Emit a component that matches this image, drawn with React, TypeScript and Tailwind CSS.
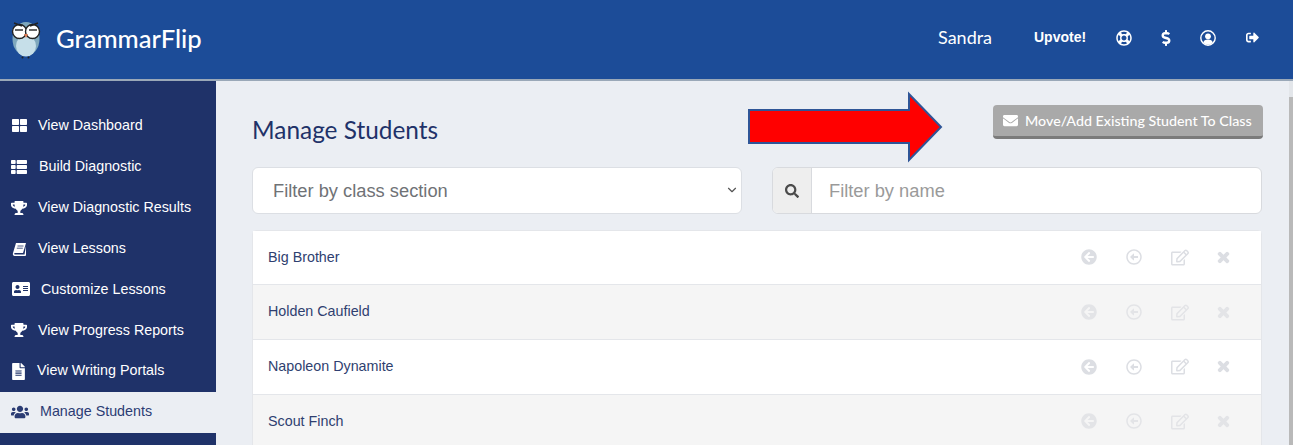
import { ChevronDown } from 'lucide-react';
import { FaAddressCard, FaArrowCircleLeft, FaDollarSign, FaEnvelope, FaFileAlt, FaRegArrowAltCircleLeft, FaRegEdit, FaRegLifeRing, FaSearch, FaSignOutAlt, FaThLarge, FaThList, FaTimes, FaTrophy, FaUsers } from 'react-icons/fa';

const Owl = () => (
  <svg width="32" height="40" viewBox="0 0 32 40" className="shrink-0">
    <ellipse cx="16" cy="20" rx="13.5" ry="17" fill="#7fa8bd" />
    <ellipse cx="16" cy="27" rx="10" ry="10.5" fill="#c6dfe9" />
    <circle cx="9.5" cy="12.5" r="7" fill="#fff" stroke="#222" strokeWidth="1.4" />
    <circle cx="22.5" cy="12.5" r="7" fill="#fff" stroke="#222" strokeWidth="1.4" />
    <path d="M4 4 L12 7 M28 4 L20 7" stroke="#222" strokeWidth="1.4" />
    <path d="M5 11 H13 M19 11 H27" stroke="#333" strokeWidth="1.6" />
    <path d="M14 15 L18 15 L16 19 Z" fill="#d9774f" />
    <circle cx="12.5" cy="38.5" r="1" fill="#222" />
    <circle cx="18.5" cy="38.5" r="1" fill="#222" />
  </svg>
);

const SlantedBook = () => (
  <svg viewBox="0 0 14 14" className="w-[14px] h-[14px] ml-[12px] mr-[12px]">
    <path fill="currentColor" d="M4 1h10l-3 10H3c-1 0-1.2 1.5 0 1.5h9.5L14 4v9l-.5 1H2.5C1 14 .5 12.5 1 11z" />
    <path stroke="#1f3269" strokeWidth="0.8" d="M5.5 4h6M4.8 6.2h6" />
  </svg>
);

const UserRing = () => (
  <svg viewBox="0 0 16 16" className="w-[16px] h-[16px] -ml-[2px]">
    <circle cx="8" cy="8" r="7.2" fill="none" stroke="currentColor" strokeWidth="1.4" />
    <circle cx="8" cy="6.3" r="2.9" fill="currentColor" />
    <path fill="currentColor" d="M3.2 12.6c.6-2 2-3 4.8-3s4.200 1 4.800 3C11.500 14 9.800 14.700 8 14.700S4.500 14 3.200 12.600z" />
  </svg>
);

const navItems = [
  { label: 'View Dashboard', icon: <FaThLarge className="w-[15px] h-[15px] ml-[12px] mr-[11px]" /> },
  { label: 'Build Diagnostic', icon: <FaThList className="w-[16px] h-[16px] ml-[11px] mr-[12px]" /> },
  { label: 'View Diagnostic Results', icon: <FaTrophy className="w-[16px] h-[16px] ml-[11px] mr-[11px]" /> },
  { label: 'View Lessons', icon: <SlantedBook /> },
  { label: 'Customize Lessons', icon: <FaAddressCard className="w-[18px] h-[16px] ml-[12px] mr-[11px]" /> },
  { label: 'View Progress Reports', icon: <FaTrophy className="w-[16px] h-[16px] ml-[11px] mr-[11px]" /> },
  { label: 'View Writing Portals', icon: <FaFileAlt className="w-[13px] h-[17px] ml-[12px] mr-[12px]" /> },
  { label: 'Manage Students', icon: <FaUsers className="w-[18px] h-[18px] ml-[11px] mr-[11px]" />, active: true },
];

const students = ['Big Brother', 'Holden Caufield', 'Napoleon Dynamite', 'Scout Finch'];

const App = () => {
  return (
    <div className="relative h-screen overflow-hidden flex flex-col bg-[#ebeef3] font-['Liberation_Sans',sans-serif]">
      {/* Top bar */}
      <header className="h-[81px] shrink-0 bg-[#1c4c98] border-b-2 border-[#9aa8b8] flex items-center text-white">
        <div className="pl-[10px] flex items-center -mt-[2px]">
          <Owl />
          <span className="ml-[14px] text-[25.6px] font-medium font-['Lato',sans-serif]">GrammarFlip</span>
        </div>
        <div className="ml-auto flex items-center pr-[5px] -mt-[4px] font-['Lato',sans-serif]">
          <span className="text-[18px] w-[96px]">Sandra</span>
          <span className="text-[14px] font-bold w-[84px] font-['Liberation_Sans',sans-serif]">Upvote!</span>
          <span className="w-[42px]"><FaRegLifeRing className="w-[16px] h-[16px] -ml-[2px]" /></span>
          <span className="w-[42px]"><FaDollarSign className="w-[16px] h-[16px] -ml-[2px]" /></span>
          <span className="w-[44px]"><UserRing /></span>
          <span className="w-[42px]"><FaSignOutAlt className="w-[13px] h-[13px]" /></span>
        </div>
      </header>

      <div className="flex-1 flex min-h-0">
        {/* Sidebar */}
        <aside className="w-[216px] shrink-0 bg-[#1f3269] pt-[24.4px] overflow-hidden">
          {navItems.map((item) => (
            <div
              key={item.label}
              className={`h-[40.9px] flex items-center text-[14.3px] ${item.active ? 'bg-[#ebeef3] text-[#2b3c73]' : 'text-white'}`}
            >
              {item.icon}
              <span>{item.label}</span>
            </div>
          ))}
        </aside>

        {/* Main */}
        <main className="flex-1 min-w-0 pl-[36px] pr-[27px]">
          <div className="flex justify-between items-start pt-[24px] h-[86px]">
            <h1 className="mt-[9.5px] text-[24.4px] leading-[30px] text-[#1f3269] font-['Lato',sans-serif]">Manage Students</h1>
            <button className="w-[270px] h-[34px] -mr-[1px] rounded-[4px] bg-[#a9a9a9] border-b-[3px] border-[#7b7b7b] text-white text-[14.25px] font-medium font-['Lato',sans-serif] flex items-center pl-[10px]">
              <FaEnvelope className="w-[15px] h-[15px] mr-[7px]" />
              Move/Add Existing Student To Class
            </button>
          </div>

          <div className="flex gap-[30px]">
            <div className="relative w-[490px] h-[47px]">
              <select className="w-full h-full appearance-none rounded-[6px] border border-[#dcdfe4] bg-white pl-[20px] text-[18.3px] text-[#6f7276]">
                <option>Filter by class section</option>
              </select>
              <ChevronDown className="absolute right-[3px] top-[16px] w-[14px] h-[14px] text-[#555]" />
            </div>
            <div className="flex-1 h-[47px] flex rounded-[6px] border border-[#d8dade] overflow-hidden bg-white">
              <div className="w-[39px] bg-[#eeeeee] border-r border-[#d8dade] flex items-center justify-center text-[#4b4b4b]">
                <FaSearch className="w-[14px] h-[14px]" />
              </div>
              <input placeholder="Filter by name" className="flex-1 pl-[17px] text-[18.3px] placeholder:text-[#9a9a9a] outline-none" />
            </div>
          </div>

          <div className="mt-[15.5px] rounded-[4px] border border-[#e4e6ea] bg-white">
            {students.map((name, i) => (
              <div
                key={name}
                className={`h-[54.7px] flex items-center pl-[15px] pr-[14px] border-b border-[#e4e6ea] text-[14.3px] text-[#2f3f70] ${i % 2 === 1 ? 'bg-[#f5f5f5]' : 'bg-white'}`}
              >
                <span>{name}</span>
                <div className={`ml-auto flex items-center ${i % 2 === 1 ? 'text-[#e3e4e7]' : 'text-[#dcdee3]'}`}>
                  <span className="w-[45px]"><FaArrowCircleLeft className="w-[16px] h-[16px]" /></span>
                  <span className="w-[45px]"><FaRegArrowAltCircleLeft className="w-[16px] h-[16px]" /></span>
                  <span className="w-[45px]"><FaRegEdit className="w-[18px] h-[17px]" /></span>
                  <span className="w-[31px]"><FaTimes className="w-[15px] h-[15px] stroke-[40]" /></span>
                </div>
              </div>
            ))}
          </div>
        </main>

        {/* Scrollbar */}
        <div className="w-[4px] shrink-0 bg-[#e3e6ea] pt-[16px]">
          <div className="h-full bg-[#b9b9b9]" />
        </div>
      </div>

      {/* Annotation arrow drawn over the page */}
      <svg width="198" height="72" viewBox="0 0 198 72" className="absolute left-[747px] top-[91px]">
        <path d="M2 19 H162 V3 L194 36 L162 69 V52 H2 Z" fill="#ff0000" stroke="#2f5597" strokeWidth="2" />
      </svg>
    </div>
  );
};

export default App;
